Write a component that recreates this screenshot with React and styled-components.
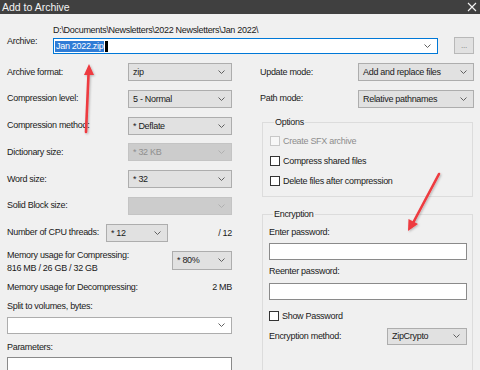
import React from "react";
import styled, { createGlobalStyle } from "styled-components";

const GlobalStyle = createGlobalStyle`
  body {
    margin: 0;
    background: #f0f0f0;
    font-family: "Liberation Sans", Arial, sans-serif;
  }
`;

const Window = styled.div`
  position: relative;
  width: 480px;
  height: 370px;
  overflow: hidden;
  background: #f0f0f0;
  color: #1a1a1a;
  font-size: 9px;
  letter-spacing: -0.3px;
  display: flex;
  flex-direction: column;
`;

const TitleBar = styled.div`
  height: 14px;
  flex: none;
  background: #404040;
  color: #f4f4f4;
  font-size: 10.5px;
  letter-spacing: 0;
  display: flex;
  align-items: center;
  justify-content: space-between;
  padding: 0 2px 0 2px;
`;

const Content = styled.div`
  padding: 0 6px 0 7px;
  display: flex;
  flex-direction: column;
`;

const ArchiveRow = styled.div`
  display: grid;
  grid-template-columns: 46px 1fr;
  margin-top: 11px;
`;

const ArchiveLabel = styled.div`
  grid-row: 1 / span 2;
  align-self: end;
  height: 11px;
  line-height: 11px;
  margin-bottom: 7px;
`;

const PathText = styled.div`
  height: 13px;
  line-height: 11px;
`;

const InputLine = styled.div`
  display: flex;
  align-items: flex-start;
  gap: 16px;
`;

const ArchiveInput = styled.div`
  width: 385px;
  height: 16px;
  box-sizing: border-box;
  border: 1px solid #0078d7;
  background: #fff;
  display: flex;
  align-items: center;
  padding: 0 6px 0 1px;
`;

const Selected = styled.span`
  background: #2f7cd6;
  color: #fff;
  line-height: 11px;
  padding: 0 1px;
`;

const Caret = styled.span`
  width: 3px;
  height: 11px;
  background: #000;
  margin-left: 1px;
`;

const Grow = styled.div`
  flex: 1;
`;

const BrowseButton = styled.div`
  width: 20px;
  height: 17px;
  box-sizing: border-box;
  border: 1px solid #b8b8b8;
  background: #e1e1e1;
  color: #777;
  font-size: 8px;
  display: flex;
  align-items: center;
  justify-content: center;
  margin-top: -1px;
`;

const Main = styled.div`
  display: flex;
  margin-top: 9px;
`;

const LeftCol = styled.div`
  width: 225px;
  display: flex;
  flex-direction: column;
`;

const RightCol = styled.div`
  width: 214px;
  margin-left: 28px;
  display: flex;
  flex-direction: column;
`;

const Row = styled.div`
  height: 18px;
  display: flex;
  align-items: center;
  justify-content: space-between;
  margin-bottom: ${(p) => p.$mb ?? 8.8}px;
`;

const Label = styled.div`
  line-height: 11px;
  color: ${(p) => (p.$disabled ? "#8d8d8d" : "inherit")};
`;

const SelectBox = styled.div`
  width: ${(p) => p.$w}px;
  height: ${(p) => p.$h ?? 18}px;
  box-sizing: border-box;
  border: 1px solid ${(p) => (p.$disabled ? "#c4c4c4" : "#adadad")};
  background: ${(p) => (p.$disabled ? "#cccccc" : p.$white ? "#fff" : "#e1e1e1")};
  color: ${(p) => (p.$disabled ? "#8f8f8f" : "inherit")};
  display: flex;
  align-items: center;
  justify-content: space-between;
  padding: 0 6px 0 4px;
  flex: none;
`;

const TextBox = styled.div`
  width: ${(p) => p.$w ?? 225}px;
  height: ${(p) => p.$h ?? 17}px;
  box-sizing: border-box;
  border: 1px solid #8a8a8a;
  background: #fff;
  flex: none;
`;

const CpuRow = styled(Row)`
  justify-content: flex-start;
`;

const CpuGap = styled.div`
  width: 7px;
`;

const CpuTotal = styled.div`
  margin-left: auto;
`;

const MemRow = styled.div`
  display: flex;
  justify-content: space-between;
  align-items: flex-start;
`;

const MemLabel = styled.div`
  line-height: 13px;
  margin-top: -1px;
`;

const MemSelectWrap = styled.div`
  margin-top: 1px;
`;

const StackLabel = styled.div`
  line-height: 11px;
  margin-top: ${(p) => p.$mt}px;
  margin-bottom: ${(p) => p.$mb}px;
`;

const DecompRow = styled.div`
  display: flex;
  justify-content: space-between;
  line-height: 11px;
  margin-top: 7px;
`;

const Group = styled.fieldset`
  margin: ${(p) => p.$mt}px 0 0 2px;
  width: 211px;
  box-sizing: border-box;
  border: 1px solid #dcdcdc;
  padding: ${(p) => p.$pad};
  min-width: 0;
  display: flex;
  flex-direction: column;
  ${(p) => (p.$open ? "border-bottom: none; height: 200px;" : "")}
`;

const Legend = styled.legend`
  padding: 0 1px;
  margin-left: 4px;
  line-height: 11px;
`;

const CheckRow = styled.div`
  display: flex;
  align-items: center;
  height: 14px;
  margin-bottom: ${(p) => p.$mb ?? 6}px;
  color: ${(p) => (p.$disabled ? "#8d8d8d" : "inherit")};
`;

const Box = styled.span`
  width: 10px;
  height: 10px;
  box-sizing: border-box;
  border: 1px solid ${(p) => (p.$disabled ? "#c8c8c8" : "#333")};
  background: ${(p) => (p.$disabled ? "#f7f7f7" : "#fff")};
  margin-right: 3px;
  flex: none;
`;

const EncLabel = styled.div`
  line-height: 11px;
  margin-top: ${(p) => p.$mt ?? 0}px;
  margin-bottom: 5.5px;
`;

const Spacer = styled.div`
  height: ${(p) => p.$h}px;
`;

const EncMethodRow = styled.div`
  display: flex;
  align-items: center;
  justify-content: space-between;
  margin-top: 5px;
  width: 198px;
`;

const Arrows = styled.svg`
  position: absolute;
  left: 0;
  top: 0;
  pointer-events: none;
`;

const Chevron = ({ color = "#606060" }) => (
  <svg width="7" height="4" viewBox="0 0 7 4">
    <polyline points="0.5,0.5 3.5,3.5 6.5,0.5" fill="none" stroke={color} strokeWidth="1" />
  </svg>
);

const Select = ({ value, w, disabled, white, h }) => (
  <SelectBox $w={w} $disabled={disabled} $white={white} $h={h}>
    <span>{value}</span>
    <Chevron color={disabled ? "#b0b0b0" : "#606060"} />
  </SelectBox>
);

const Check = ({ label, disabled, mb }) => (
  <CheckRow $disabled={disabled} $mb={mb}>
    <Box $disabled={disabled} />
    {label}
  </CheckRow>
);

const App = () => {
  return (
    <>
      <GlobalStyle />
      <Window>
        <TitleBar>
          <span>Add to Archive</span>
          <svg width="10" height="10" viewBox="0 0 10 10" style={{ marginRight: 1 }}>
            <path d="M1 1 L9 9 M9 1 L1 9" stroke="#f4f4f4" strokeWidth="1.1" />
          </svg>
        </TitleBar>
        <Content>
          <ArchiveRow>
            <ArchiveLabel>Archive:</ArchiveLabel>
            <PathText>D:\Documents\Newsletters\2022 Newsletters\Jan 2022\</PathText>
            <InputLine>
              <ArchiveInput>
                <Selected>Jan 2022.zip</Selected>
                <Caret />
                <Grow />
                <Chevron />
              </ArchiveInput>
              <BrowseButton>...</BrowseButton>
            </InputLine>
          </ArchiveRow>

          <Main>
            <LeftCol>
              <Row>
                <Label>Archive format:</Label>
                <Select value="zip" w={104} />
              </Row>
              <Row>
                <Label>Compression level:</Label>
                <Select value="5 - Normal" w={104} />
              </Row>
              <Row>
                <Label>Compression method:</Label>
                <Select value="*  Deflate" w={104} />
              </Row>
              <Row>
                <Label>Dictionary size:</Label>
                <Select value="*  32 KB" w={104} disabled />
              </Row>
              <Row>
                <Label>Word size:</Label>
                <Select value="*  32" w={104} />
              </Row>
              <Row>
                <Label>Solid Block size:</Label>
                <Select value="" w={104} disabled />
              </Row>
              <CpuRow $mb={8}>
                <Label>Number of CPU threads:</Label>
                <CpuGap />
                <Select value="*  12" w={62} />
                <CpuTotal>/ 12</CpuTotal>
              </CpuRow>
              <MemRow>
                <MemLabel>
                  Memory usage for Compressing:
                  <br />
                  816 MB / 26 GB / 32 GB
                </MemLabel>
                <MemSelectWrap>
                  <Select value="* 80%" w={60} h={19} />
                </MemSelectWrap>
              </MemRow>
              <DecompRow>
                <span>Memory usage for Decompressing:</span>
                <span>2 MB</span>
              </DecompRow>
              <StackLabel $mt={8} $mb={5}>Split to volumes, bytes:</StackLabel>
              <Select value="" w={225} white h={17} />
              <StackLabel $mt={8} $mb={4}>Parameters:</StackLabel>
              <TextBox $h={20} />
            </LeftCol>

            <RightCol>
              <Row>
                <Label>Update mode:</Label>
                <Select value="Add and replace files" w={116} />
              </Row>
              <Row $mb={0}>
                <Label>Path mode:</Label>
                <Select value="Relative pathnames" w={116} />
              </Row>
              <Group $mt={9} $pad="6px 6px 8px 7px">
                <Legend>Options</Legend>
                <Check label="Create SFX archive" disabled />
                <Check label="Compress shared files" />
                <Check label="Delete files after compression" mb={0} />
              </Group>
              <Group $mt={12} $pad="7px 6px 0 6px" $open>
                <Legend>Encryption</Legend>
                <EncLabel>Enter password:</EncLabel>
                <TextBox $w={198} $h={17} />
                <EncLabel $mt={6}>Reenter password:</EncLabel>
                <TextBox $w={198} $h={17} />
                <Spacer $h={9} />
                <Check label="Show Password" mb={0} />
                <EncMethodRow>
                  <Label>Encryption method:</Label>
                  <Select value="ZipCrypto" w={80} h={17} />
                </EncMethodRow>
              </Group>
            </RightCol>
          </Main>
        </Content>

        <Arrows width="480" height="370" viewBox="0 0 480 370">
          <defs>
            <filter id="sh" x="-20%" y="-20%" width="140%" height="140%">
              <feDropShadow dx="1" dy="1" stdDeviation="0.8" floodColor="#000" floodOpacity="0.25" />
            </filter>
          </defs>
          <g filter="url(#sh)" stroke="#ee3a3f" fill="#ee3a3f" strokeLinecap="round">
            <line x1="86" y1="132" x2="88.6" y2="72" strokeWidth="2.6" />
            <polygon points="89,64 84,75 94,75" stroke="none" />
            <line x1="439" y1="174" x2="413" y2="223" strokeWidth="2.6" />
            <polygon points="408,231 408.5,219 418,224" stroke="none" />
          </g>
        </Arrows>
      </Window>
    </>
  );
};

export default App;
